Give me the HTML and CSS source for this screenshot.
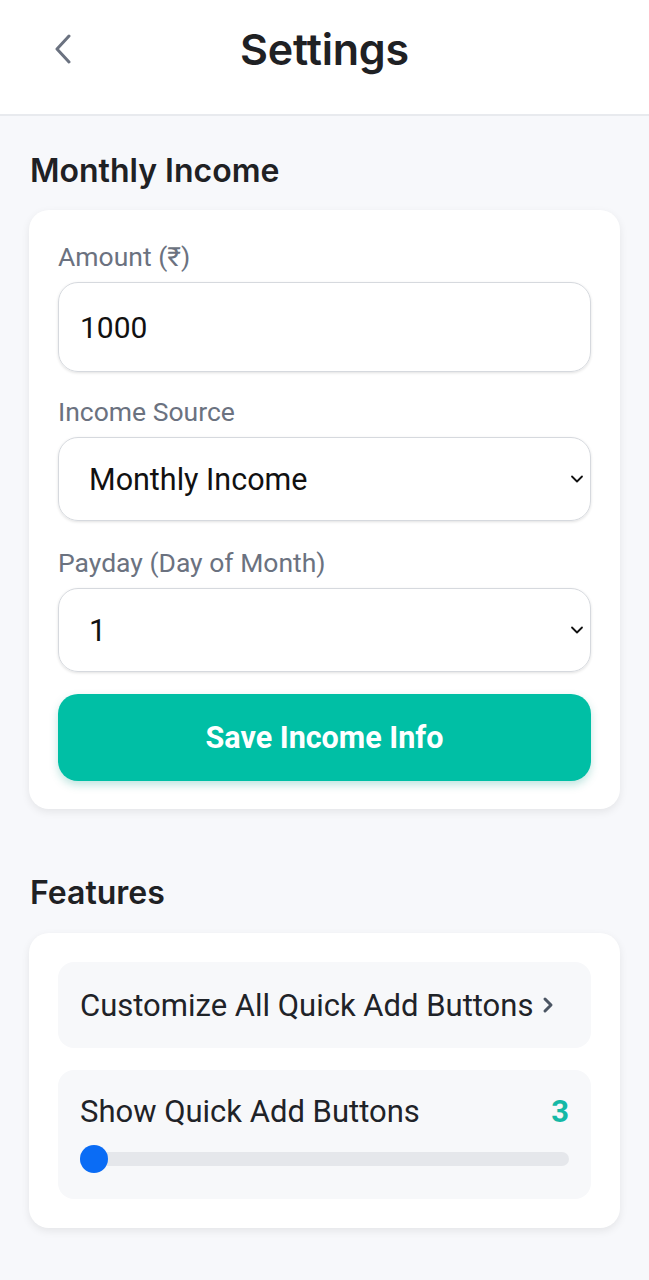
FILE: index.html
```html
<!DOCTYPE html>
<html>
<head>
<meta charset="utf-8">
<link rel="stylesheet" href="styles.css">
</head>
<body>
<header class="topbar">
  <button class="back" aria-label="Back">
    <svg width="20" height="30" viewBox="0 0 20 30"><path d="M16 2 L4 15 L16 28" fill="none" stroke="#6b7280" stroke-width="3" stroke-linecap="round" stroke-linejoin="round"/></svg>
  </button>
  <h1 class="title">Settings</h1>
</header>
<main class="content">
  <h2 class="section-title">Monthly Income</h2>
  <section class="card income">
    <label class="label">Amount (₹)</label>
    <div class="field input">1000</div>
    <label class="label">Income Source</label>
    <div class="field select"><span>Monthly Income</span>
      <svg class="caret" width="14" height="10" viewBox="0 0 14 10"><path d="M2 2.5 L7 7.5 L12 2.5" fill="none" stroke="#111" stroke-width="1.8" stroke-linecap="round" stroke-linejoin="round"/></svg>
    </div>
    <label class="label">Payday (Day of Month)</label>
    <div class="field select"><span>1</span>
      <svg class="caret" width="14" height="10" viewBox="0 0 14 10"><path d="M2 2.5 L7 7.5 L12 2.5" fill="none" stroke="#111" stroke-width="1.8" stroke-linecap="round" stroke-linejoin="round"/></svg>
    </div>
    <button class="save">Save Income Info</button>
  </section>

  <h2 class="section-title features-title">Features</h2>
  <section class="card features">
    <div class="row link">
      <span>Customize All Quick Add Buttons</span>
      <svg width="14" height="20" viewBox="0 0 14 20"><path d="M4 4 L10 10 L4 16" fill="none" stroke="#4b5563" stroke-width="3" stroke-linecap="round" stroke-linejoin="round"/></svg>
    </div>
    <div class="row slider-row">
      <div class="slider-head">
        <span>Show Quick Add Buttons</span>
        <span class="count">3</span>
      </div>
      <div class="track"><div class="thumb"></div></div>
    </div>
  </section>
</main>
</body>
</html>
```

FILE: styles.css
```css
* { box-sizing: border-box; }
html, body { margin: 0; padding: 0; }
body {
  background: #f7f8fb;
  font-family: Roboto, "Noto Sans", sans-serif;
  color: #1f2328;
  width: 649px;
  min-height: 1280px;
}
.topbar {
  height: 116px;
  background: #fff;
  border-bottom: 2px solid #e8eaee;
  display: flex;
  align-items: center;
  justify-content: center;
  position: relative;
  padding-bottom: 16px;
}
.back {
  position: absolute;
  left: 52px;
  top: 34px;
  background: none;
  border: 0;
  padding: 0;
  width: 22px;
  height: 30px;
}
.title {
  margin: 0;
  font-family: Inter, sans-serif;
  font-weight: 600;
  font-size: 43px;
  color: #1f2124;
  letter-spacing: -0.2px;
}
.content {
  padding: 37px 29px 40px 29px;
}
.section-title {
  margin: 0 0 21px 1px;
  font-family: Inter, sans-serif;
  font-weight: 600;
  font-size: 32px;
  line-height: 36px;
  color: #1f2124;
}
.features-title { margin-top: 66px; margin-bottom: 22px; }
.card {
  background: #fff;
  border-radius: 20px;
  box-shadow: 0 3px 8px rgba(0,0,0,0.08);
  display: flex;
  flex-direction: column;
}
.income { padding: 32px 29px 28px 29px; }
.label {
  font-size: 26.5px;
  line-height: 30px;
  color: #6b7280;
  margin-bottom: 10px;
}
.field {
  border: 1.5px solid #d6d9de;
  border-radius: 20px;
  box-shadow: 0 1px 3px rgba(0,0,0,0.12);
  display: flex;
  align-items: center;
  color: #111;
}
.input {
  height: 90px;
  margin-bottom: 25px;
  padding-left: 21px;
  font-size: 30px;
}
.select {
  height: 84px;
  margin-bottom: 27px;
  padding: 0 6px 0 30px;
  font-size: 30.5px;
  justify-content: space-between;
}
.save {
  margin-top: -5px;
  height: 87px;
  border: 0;
  border-radius: 20px;
  background: #00bfa5;
  color: #fff;
  font-family: Roboto, sans-serif;
  font-weight: 700;
  font-size: 30.5px;
  box-shadow: 0 4px 8px rgba(0,150,130,0.25);
}
.features { padding: 29px; gap: 22px; }
.row {
  background: #f7f8fa;
  border-radius: 16px;
}
.link {
  height: 86px;
  display: flex;
  align-items: center;
  padding: 0 30px 0 22px;
  gap: 8px;
  font-size: 31px;
  color: #1f2328;
}
.slider-row {
  padding: 24px 22px 32px 22px;
  height: 129px;
}
.slider-head {
  display: flex;
  justify-content: space-between;
  font-size: 31px;
  line-height: 36px;
}
.count {
  color: #14b8a6;
  font-weight: 700;
}
.track {
  margin-top: 22px;
  height: 14px;
  background: #e5e7eb;
  border-radius: 7px;
  position: relative;
}
.thumb {
  position: absolute;
  left: 0;
  top: -7px;
  width: 28px;
  height: 28px;
  border-radius: 50%;
  background: #0a6cf5;
}
```
